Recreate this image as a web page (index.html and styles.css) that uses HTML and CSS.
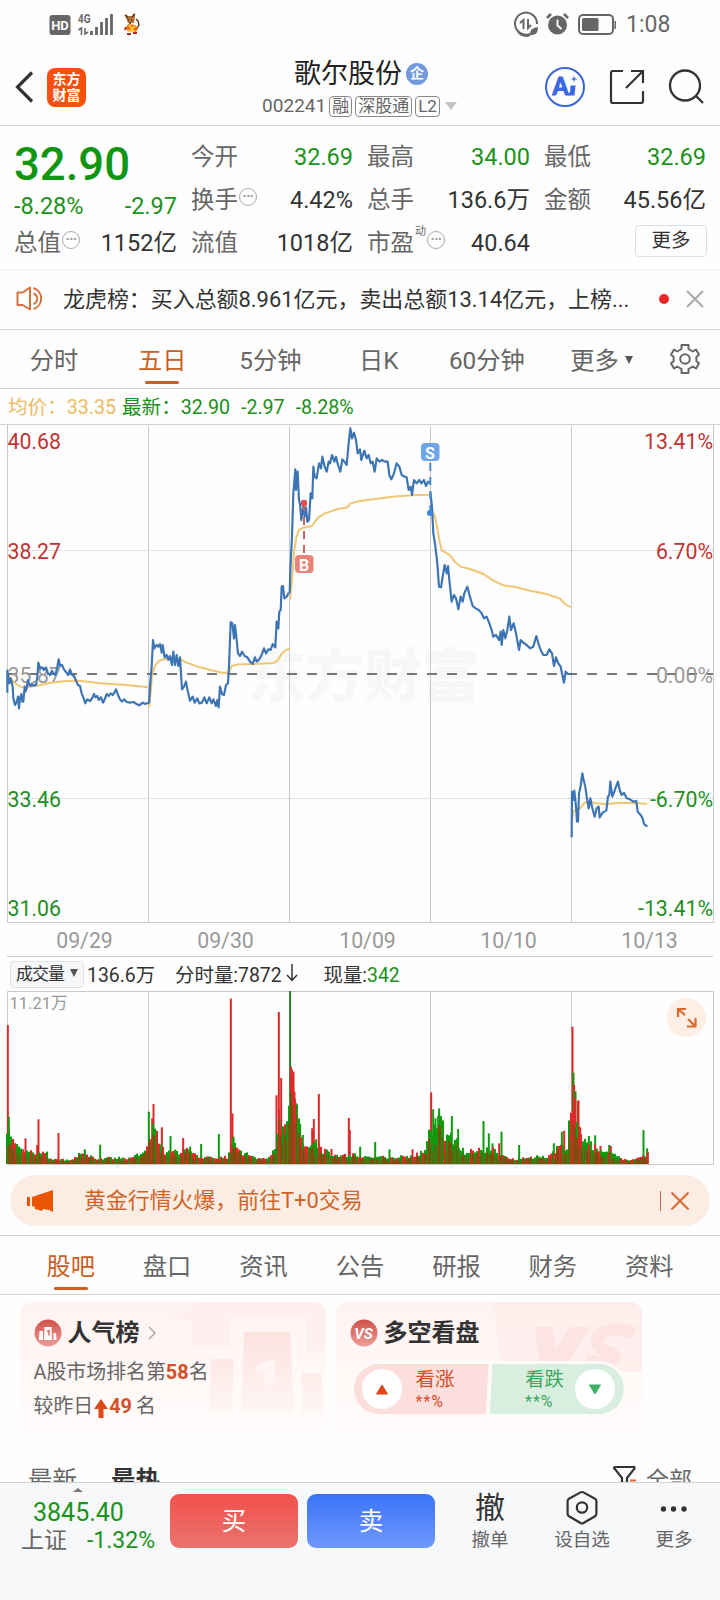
FILE: index.html
```html
<!DOCTYPE html>
<html lang="zh-CN">
<head>
<meta charset="utf-8">
<title>歌尔股份 002241</title>
<link rel="stylesheet" href="styles.css">
</head>
<body>
<main class="screen">
  <div class="status">
    <svg class="status-left" width="100" height="30" viewBox="45 8 100 30">
      <rect x="49.5" y="15" width="21" height="20" rx="3" fill="#666"/>
      <text x="60" y="30.2" text-anchor="middle" class="hd">HD</text>
      <text x="78" y="23" class="net" textLength="12.500" lengthAdjust="spacingAndGlyphs">4G</text>
      <path d="M78.500 30l3-2v7M85 28v6l3-2" fill="none" stroke="#666" stroke-width="1.600"/>
      <path d="M91.500 35v-4M96.500 35v-8M101.500 35v-13M106.500 35V18M111.500 35V14" stroke="#666" stroke-width="2.800"/>
      <path d="M126 14l2 2h4l2-3 1 4-1 6h-6l-2-5z" fill="#b87333"/>
      <path d="M125 15l3 3M132 17l3-3M128 20h1M131 20h1M129 23h2M136 30l3-5-1-4-2-2" fill="none" stroke="#553018" stroke-width="1.400"/>
      <path d="M128 24l7 1 3 3-2 4h-8l-2-4z" fill="#ee6c16"/>
      <path d="M129 25l3 4 3-3M128 31h7" fill="none" stroke="#f7d13b" stroke-width="2"/>
      <path d="M127 34h4M133 33h4M126 27l-1 3" stroke="#b32d17" stroke-width="2"/>
    </svg>
    <svg class="status-right" width="106" height="30" viewBox="510 8 106 30">
      <path d="M535 30a11 11 0 1 1 2-6M530 35a10 10 0 0 1-12 -3" fill="none" stroke="#666" stroke-width="2"/>
      <path d="M520 23l3.500-3v9M528 19v9l3-3" fill="none" stroke="#666" stroke-width="2"/>
      <path d="M538 27c0 7-3 8-8 8 0-6 3-7 8-8z" fill="#666"/>
      <circle cx="557.500" cy="25" r="9.500" fill="#666"/>
      <path d="M547 18l4-4M568 18l-4-4" stroke="#666" stroke-width="2.600"/>
      <path d="M557.500 19.500v6l4 3.500" fill="none" stroke="#fff" stroke-width="1.800"/>
      <rect x="579" y="15" width="34" height="19" rx="4" fill="none" stroke="#666" stroke-width="2"/>
      <rect x="582" y="18" width="16.500" height="13" rx="1.500" fill="#666"/>
      <path d="M615.500 21v8" stroke="#666" stroke-width="2"/>
    </svg>
    <span class="clock">1:08</span>
  </div>

  <header class="head">
    <div class="head-side">
      <svg width="20" height="34" viewBox="0 0 20 34"><path d="M18 2.500L3.500 17 18 31.500" fill="none" stroke="#333" stroke-width="3.200"/></svg>
      <div class="logo"><span>东方</span><span>财富</span></div>
    </div>
    <div class="head-mid">
      <div class="name">歌尔股份<i class="qi">企</i></div>
      <div class="code">002241<b>融</b><b>深股通</b><b>L2</b><i class="tri"></i></div>
    </div>
    <div class="head-side head-tools">
      <svg width="42" height="42" viewBox="0 0 42 42"><circle cx="21" cy="21" r="19" fill="none" stroke="#3a66dc" stroke-width="2"/><text x="8.500" y="29" class="ai" textLength="16" lengthAdjust="spacingAndGlyphs">A</text><path d="M26.500 19.500h5l-1 10h-6l.4-3h1.200z" fill="#3a66e4"/><path d="M30 9.500l.8 2.700 2.700.8-2.700.8-.8 2.700-.8-2.700-2.700-.8 2.700-.8z" fill="#3a66e4"/></svg>
      <svg width="36" height="36" viewBox="0 0 36 36"><path d="M14 2H4a2 2 0 0 0-2 2v28a2 2 0 0 0 2 2h28a2 2 0 0 0 2-2V22M22 2h12v12M33 3L17 19" fill="none" stroke="#333" stroke-width="2.200"/></svg>
      <svg width="36" height="36" viewBox="0 0 36 36"><circle cx="17" cy="16.500" r="15" fill="none" stroke="#333" stroke-width="2.300"/><path d="M28 27l7 7" stroke="#333" stroke-width="2.300"/></svg>
    </div>
  </header>

  <section class="quote">
    <div class="qcol wide">
      <div class="price">32.90</div>
      <div class="qcell green chg"><span>-8.28%</span><span>-2.97</span></div>
      <div class="qcell"><label>总值<i class="info">···</i></label><span>1152亿</span></div>
    </div>
    <div class="qcol">
      <div class="qcell"><label>今开</label><span class="green">32.69</span></div>
      <div class="qcell"><label>换手<i class="info">···</i></label><span>4.42%</span></div>
      <div class="qcell"><label>流值</label><span>1018亿</span></div>
    </div>
    <div class="qcol wide">
      <div class="qcell"><label>最高</label><span class="green">34.00</span></div>
      <div class="qcell"><label>总手</label><span>136.6万</span></div>
      <div class="qcell"><label>市盈<sup>动</sup><i class="info">···</i></label><span>40.64</span></div>
    </div>
    <div class="qcol">
      <div class="qcell"><label>最低</label><span class="green">32.69</span></div>
      <div class="qcell"><label>金额</label><span>45.56亿</span></div>
      <div class="qcell end"><span class="more">更多</span></div>
    </div>
  </section>

  <section class="news">
    <svg width="30" height="26" viewBox="0 0 30 26"><path d="M1.500 6.500h5L14 1.500v22L6.500 19h-5z" fill="none" stroke="#d4713c" stroke-width="2" stroke-linejoin="round"/><path d="M17.500 7.500a5.600 5.600 0 0 1 0 10.500M17.500 2a11 11 0 0 1 0 21" fill="none" stroke="#d4713c" stroke-width="2"/></svg>
    <span class="news-text">龙虎榜：买入总额8.961亿元，卖出总额13.14亿元，上榜...</span>
    <i class="dot"></i>
    <svg width="18" height="18" viewBox="0 0 18 18"><path d="M1 1l16 16M17 1L1 17" stroke="#aaa" stroke-width="2"/></svg>
  </section>

  <nav class="periods">
    <span>分时</span><span class="on">五日</span><span>5分钟</span><span>日K</span><span>60分钟</span><span>更多<i class="caret"></i></span>
    <svg width="30" height="30" viewBox="0 0 30 30"><path d="M11.500 1h7v4l4.300 2.500L26 5.600l3 5.200-2.600 2v4.400l2.600 2-3 5.200-3.200-1.900-4.300 2.500v4h-7v-4l-4.300-2.500L4 24.400l-3-5.200 2.600-2v-4.400l-2.600-2 3-5.200 3.200 1.900L11.500 5z" fill="none" stroke="#666" stroke-width="2" stroke-linejoin="round"/><circle cx="15" cy="15" r="4.800" fill="none" stroke="#666" stroke-width="2"/></svg>
  </nav>

  <div class="legend"><span class="avg">均价：33.35</span><span>最新：32.90</span><span>-2.97</span><span>-8.28%</span></div>

  <svg class="chart" width="720" height="532" viewBox="0 425 720 532">
    <g class="mark"><text x="248" y="697">东方财富</text></g>
    <path class="grid" d="M7.500 425v497.500h706V425M148.500 426v496M289.500 426v496M430.500 426v496M571.500 426v496M7 956.500h706"/>
    <path class="dots" d="M8 550.500h705M8 798.500h705"/>
    <path class="zero" d="M7 674h706"/>
    <g class="axis">
      <text class="up" x="7.500" y="448.500">40.68</text><text class="up" x="7.500" y="558.500">38.27</text>
      <text class="flat" x="7.500" y="682.500">35.87</text>
      <text class="dn" x="7.500" y="806.500">33.46</text><text class="dn" x="7.500" y="916">31.06</text>
      <g text-anchor="end">
        <text class="up" x="713" y="448.500">13.41%</text><text class="up" x="713" y="558.500">6.70%</text>
        <text class="flat" x="713" y="682.500">0.00%</text>
        <text class="dn" x="713" y="806.500">-6.70%</text><text class="dn" x="713" y="916">-13.41%</text>
      </g>
      <g text-anchor="middle" class="flat">
        <text x="84.500" y="947.500">09/29</text><text x="225.500" y="947.500">09/30</text><text x="367.500" y="947.500">10/09</text><text x="508.500" y="947.500">10/10</text><text x="649.500" y="947.500">10/13</text>
      </g>
    </g>
    <g transform="translate(0 420) scale(.33333)">
      <g class="avgline">
        <path d="M24 765L45 790 65 802 90 800 120 796 150 788 200 783 240 782 300 790 370 794 445 802"/>
        <path d="M447 862L452 820 456 765 465 737 478 722 495 717 540 718 560 728 600 742 640 752 670 759 688 757 695 738 715 733 760 732 820 729 832 722 845 702 855 692 868 686"/>
        <path d="M870 538L876 480 882 400 888 355 897 330 910 323 935 318 955 292 975 280 1010 268 1042 262 1052 250 1080 243 1130 236 1190 229 1240 226 1290 224"/>
        <path d="M1292 262L1305 290 1312 325 1320 370 1326 392 1350 405 1364 425 1382 440 1410 447 1450 462 1480 482 1510 496 1550 502 1590 512 1640 522 1680 536 1698 555 1714 562"/>
        <path d="M1715 1205L1721 1172 1740 1165 1755 1147 1770 1146 1790 1150 1820 1153 1850 1149 1900 1148 1942 1152"/>
      </g>
      <g class="priceline">
        <path d="M22 818L22 752 28 790 32 775 38 800 40 835 45 855 50 845 54 830 57 865 60 835 64 822 67 845 70 845 74 800 76 815 80 805 84 780 88 795 92 798 96 790 100 797 108 795 112 770 115 728 120 745 126 742 132 750 138 742 143 758 150 765 156 752 160 760 166 765 172 740 176 718 180 738 186 735 192 748 198 756 204 765 210 748 216 765 222 768 228 782 234 795 240 798 245 820 250 832 256 850 262 838 270 843 276 835 282 822 286 832 292 828 296 840 303 832 309 848 314 838 320 822 326 828 332 820 338 825 343 818 348 808 354 825 360 838 366 845 372 838 380 846 390 848 400 846 410 852 418 856 428 848 436 852 445 848M447 850L450 800 455 740 459 660 463 685 470 675 475 680 480 672 485 698 488 675 494 712 500 705 505 720 510 708 516 735 520 695 525 735 530 705 535 738 540 712 543 760 546 808 552 800 558 785 563 812 570 842 578 830 584 848 592 835 598 850 606 848 613 832 620 850 628 832 635 850 640 838 648 858 652 840 656 862 660 800 666 822 672 825 678 795 684 790 687 740 692 606 697 610 702 655 705 615 710 660 714 700 720 708 726 695 734 708 742 712 750 725 758 732 765 712 770 725 778 718 785 705 792 685 798 700 805 688 812 690 818 672 826 682 830 605 835 625 838 575 842 570 845 500 849 498 853 535 860 530 866 518"/>
        <path d="M869 520L871 450 876 350 880 220 886 148 888 210 893 155 897 240 900 252 904 300 910 258 914 290 918 262 922 305 927 300 932 220 937 235 940 140 944 170 950 175 957 130 963 145 967 110 974 140 980 155 986 125 990 130 996 105 1003 125 1008 110 1014 135 1021 155 1027 118 1033 125 1040 135 1046 70 1051 25 1056 55 1062 38 1068 60 1073 100 1080 88 1084 120 1093 92 1100 115 1106 105 1112 130 1118 125 1124 155 1130 115 1138 125 1146 120 1155 125 1163 125 1168 165 1174 178 1182 160 1190 130 1198 140 1205 165 1213 170 1220 172 1226 210 1232 200 1236 225 1242 180 1250 190 1258 180 1264 190 1272 180 1278 198 1284 185 1291 190"/>
        <path d="M1291 215L1296 260 1300 340 1305 370 1312 430 1317 500 1323 502 1328 470 1334 435 1340 460 1344 438 1348 480 1355 545 1362 525 1368 535 1375 568 1382 530 1388 545 1393 520 1402 500 1410 530 1418 558 1427 565 1436 570 1445 580 1452 595 1460 590 1468 610 1475 630 1480 650 1488 645 1497 660 1502 635 1505 675 1510 630 1516 655 1522 630 1528 590 1533 630 1541 610 1548 640 1557 690 1562 660 1570 668 1580 675 1590 685 1600 680 1609 648 1615 670 1622 690 1630 705 1640 705 1648 688 1656 700 1662 738 1668 712 1675 730 1682 740 1687 765 1692 788 1697 755 1704 762 1714 762"/>
        <path d="M1715 1252L1716 1115 1720 1140 1723 1112 1728 1160 1731 1205 1734 1205 1737 1120 1741 1105 1747 1060 1751 1080 1756 1100 1760 1130 1766 1165 1771 1135 1776 1160 1784 1190 1790 1165 1796 1160 1799 1192 1808 1178 1819 1172 1824 1130 1828 1125 1831 1085 1837 1130 1842 1118 1848 1100 1854 1085 1859 1110 1865 1125 1872 1118 1880 1135 1890 1138 1900 1145 1909 1143 1913 1175 1922 1185 1928 1195 1932 1212 1942 1220"/>
      </g>
    </g>
    <g class="trade">
      <path d="M304 503v50" stroke="#cf6560" stroke-width="2" stroke-dasharray="8 6"/><circle cx="304" cy="503" r="3.200" fill="#e05050"/>
      <rect x="295" y="555" width="18.500" height="18" rx="4" fill="#e98478"/><text x="304.200" y="570.500">B</text>
      <path d="M430.300 463v50" stroke="#4d8ad0" stroke-width="2" stroke-dasharray="8 6"/><circle cx="430" cy="513" r="3" fill="#3f86e8"/>
      <rect x="421" y="443" width="18.500" height="18" rx="4" fill="#6fa5e8"/><text x="430" y="458.500">S</text>
    </g>
  </svg>

  <div class="volhead"><span class="pick">成交量<i class="caret"></i></span><span class="v1">136.6万</span><span class="v2">分时量:7872<svg width="12" height="18" viewBox="0 0 12 18"><path d="M6 0v16M1 11l5 5.500L11 11" fill="none" stroke="#333" stroke-width="1.500"/></svg></span><span>现量:<em class="green">342</em></span></div>

  <svg class="vol" width="720" height="175" viewBox="0 991 720 175">
    <path class="grid" d="M7.500 991.500h706v173H7.500zM148.500 992v172M289.500 992v172M430.500 992v172M571.500 992v172"/>
    <text x="9.500" y="1009" class="volmax">11.21万</text>
    <g id="bars" transform="translate(0 940) scale(.33333)"></g>
    <circle cx="686.500" cy="1017.500" r="19.500" fill="#fdeee6"/>
    <path d="M685 1015l-7-6M678 1017v-8h8M688 1019l7 7M687 1026.500h8.500V1018" fill="none" stroke="#d96a2c" stroke-width="2.200"/>
  </svg>

  <div class="promo">
    <svg width="28" height="24" viewBox="0 0 28 24"><path d="M0 8h3v9H0zM5 8L26 1v22l-4-2-6-1-1 2-7-2v-2l-3-1z" fill="#ea5504"/></svg>
    <span class="promo-text">黄金行情火爆，前往T+0交易</span>
    <i class="bar"></i>
    <svg width="18" height="18" viewBox="0 0 18 18"><path d="M.500 .500l17 17M17.500 .500l-17 17" stroke="#dd6a33" stroke-width="2"/></svg>
  </div>

  <nav class="tabs"><span class="on">股吧</span><span>盘口</span><span>资讯</span><span>公告</span><span>研报</span><span>财务</span><span>资料</span></nav>

  <section class="cards">
    <article class="card">
      <svg class="deco" width="306" height="136" viewBox="0 0 306 136"><defs><linearGradient id="dg" x1="0" y1="0" x2="0" y2="1"><stop offset="0" stop-color="#fce2df"/><stop offset="1" stop-color="#fef6f4"/></linearGradient></defs><path d="M178 0h128v50h-20V15h-76v30h-38V18h-22z" fill="#fdeeec" opacity=".7"/><path d="M191 57h23l-2 54h-23zM224 30h46l4 81h-53zM282 71h19l2 40h-21z" fill="url(#dg)"/><path d="M236 63l18-6 2 26h-12l-1-14-7 2z" fill="#fff5f2"/></svg>
      <h3><svg width="28" height="28" viewBox="0 0 28 28"><defs><linearGradient id="rg" x1="0" y1="0" x2="0" y2="1"><stop offset="0" stop-color="#d1504b"/><stop offset="1" stop-color="#ec9f98"/></linearGradient></defs><circle cx="14" cy="14" r="13.500" fill="url(#rg)"/><path d="M5.500 12h3.500v9H5zM10.500 8h7l.500 13H10zM19.500 14h2.500l.500 7h-3z" fill="#fff"/><path d="M13 12.500l2-1v5" stroke="#d96b65" fill="none" stroke-width="1.500"/></svg>人气榜<svg class="chev" width="8" height="14" viewBox="0 0 8 14"><path d="M1 1l6 6-6 6" fill="none" stroke="#aaa" stroke-width="1.500"/></svg></h3>
      <p>A股市场排名第<strong>58</strong>名</p>
      <p>较昨日<svg width="16" height="19" viewBox="0 0 16 19"><path d="M8 0l7 10H10.500v9h-5v-9H1z" fill="#dd4a1a"/></svg><strong>49</strong><span class="unit">名</span></p>
    </article>
    <article class="card">
      <svg class="deco" width="306" height="136" viewBox="0 0 306 136"><path d="M158 0h148v70H165z" fill="#fdeae8" opacity=".6"/><path d="M199 25h17l4 22 14-22h20l-25 40h-25z" fill="#fce4e2"/><path d="M298 31q-12-5-24-3-14 3-13 13 1 6 12 9 9 3 3 8-8 5-26 0" fill="none" stroke="#fce4e2" stroke-width="12"/></svg>
      <h3><svg width="28" height="28" viewBox="0 0 28 28"><circle cx="14" cy="14" r="13.500" fill="url(#rg)"/><text x="13.500" y="19.500" class="vs">VS</text></svg>多空看盘</h3>
      <div class="poll">
        <div class="bull"><i class="ball"><svg width="14" height="11" viewBox="0 0 14 11"><path d="M7 1l5.500 9h-11z" fill="#dd4a1a" stroke="#dd4a1a" stroke-linejoin="round"/></svg></i><span>看涨<small>**%</small></span></div>
        <div class="bear"><span>看跌<small>**%</small></span><i class="ball"><svg width="14" height="11" viewBox="0 0 14 11"><path d="M7 10L1.500 1h11z" fill="#3fae65" stroke="#3fae65" stroke-linejoin="round"/></svg></i></div>
      </div>
    </article>
  </section>

  <section class="feed"><span>最新</span><span class="hot">最热</span><span class="all"><svg width="26" height="26" viewBox="0 0 26 26"><path d="M3 2h18a1 1 0 0 1 1 2l-7 9v11l-5-4v-7L3 4a1 1 0 0 1 0-2z" fill="none" stroke="#333" stroke-width="2.200"/><path d="M18 15.500h6" stroke="#dd6a33" stroke-width="2"/></svg>全部</span></section>

  <footer class="dock">
    <div class="index"><i class="up-tri"></i><div class="idx">3845.40</div><div class="idx2"><label>上证</label><span>-1.32%</span></div></div>
    <button class="buy">买</button><button class="sell">卖</button>
    <div class="act"><b>撤</b><span>撤单</span></div>
    <div class="act"><svg width="34" height="36" viewBox="0 0 34 36"><path d="M15.500 2.400q1.500-.8 3 0l11.500 6.400q1.400.8 1.400 2.400v12.600q0 1.600-1.400 2.400l-11.500 6.800q-1.500.8-3 0L4 26.200q-1.400-.8-1.400-2.400V11.200q0-1.600 1.400-2.400z" fill="none" stroke="#333" stroke-width="2.200"/><circle cx="17" cy="17.500" r="5.200" fill="none" stroke="#333" stroke-width="2.200"/></svg><span>设自选</span></div>
    <div class="act"><svg width="34" height="36" viewBox="0 0 34 36"><circle cx="6.500" cy="19" r="2.700" fill="#333"/><circle cx="16.500" cy="19" r="2.700" fill="#333"/><circle cx="27" cy="19" r="2.700" fill="#333"/></svg><span>更多</span></div>
  </footer>
</main>
<script src="volume.js"></script>
</body>
</html>
```
FILE: styles.css
```css
* { box-sizing: border-box; }
body { margin: 0; background: #fefefe; font-family: Roboto, "Noto Sans CJK SC", sans-serif; color: #333; }
i, em { font-style: normal; }
svg { display: block; flex: none; }
.screen { width: 720px; height: 1600px; overflow: hidden; display: flex; flex-direction: column; }
.screen > * { flex: none; }
.green { color: #1a931a; }

.status { height: 50px; display: flex; padding: 8px 0 0 45px; }
.status-right { margin-left: 365px; }
.clock { margin-left: 10px; font-size: 23px; line-height: 34px; color: #666; }
.hd { font: 700 13px Roboto, sans-serif; fill: #fff; }
.net { font: 700 13px Roboto, sans-serif; fill: #666; }

.head { height: 76px; display: flex; justify-content: space-between; border-bottom: 1px solid #d2d2d2; padding: 0 16px 0 14px; }
.head-side { display: flex; width: 200px; align-items: center; padding-bottom: 1px; }
.logo { margin-left: 13px; width: 39px; height: 39px; border-radius: 8px; background: #fa4f0c; color: #fff; font-weight: 700; font-size: 14px; line-height: 16.5px; display: flex; flex-direction: column; align-items: center; justify-content: center; }
.head-tools { justify-content: flex-end; gap: 23px; }
.ai { font: 900 25px Lato, sans-serif; fill: #3a66e4; stroke: #3a66e4; stroke-width: 1; }
.head-mid { display: flex; flex-direction: column; align-items: center; padding-top: 5px; }
.name { display: flex; align-items: center; font-size: 27px; line-height: 38px; margin-left: 4px; color: #222; }
.qi { width: 22px; height: 22px; border-radius: 11px; background: #7198dd; color: #fff; font-size: 14px; font-weight: 700; line-height: 21px; text-align: center; margin-left: 4px; }
.code { display: flex; align-items: center; font-size: 19px; line-height: 24px; margin: 1px 0 0 1px; color: #666; }
.code b { font-weight: 400; font-size: 17px; line-height: 19px; border: 1px solid #888; border-radius: 4px; padding: 0 2px; margin-left: 3px; height: 21px; }
.tri { border: 6.500px solid transparent; border-top: 8px solid #c4c4c4; border-bottom: 0; margin-left: 5px; }

.quote { height: 144px; display: flex; gap: 14px; padding: 7px 14px 0; border-bottom: 1px solid #eee; }
.qcol { flex: none; width: 162px; }
.wide { width: 163px; }
.qcell { height: 43px; display: flex; justify-content: space-between; font-size: 23.500px; line-height: 48px; white-space: nowrap; }
.qcell label { display: flex; color: #666; }
.price { height: 50px; font-size: 45.500px; line-height: 63px; font-weight: 500; color: #109610; }
.chg { height: 36px; line-height: 46px; }
.info { width: 18px; height: 18px; border: 1.500px solid #aaa; border-radius: 9px; margin: 12px 0 0 1px; font-size: 14px; line-height: 14px; font-weight: 700; text-align: center; color: #999; letter-spacing: -.5px; }
.qcell sup { font-size: 11px; line-height: 26px; margin-left: 1px; }
.qcell.end { justify-content: flex-end; align-items: center; }
.more { width: 72px; height: 32px; margin-right: -1px; border: 1px solid #d8dde2; border-radius: 4px; font-size: 19.500px; line-height: 29px; text-align: center; }

.news { height: 60px; display: flex; align-items: center; border-bottom: 1px solid #d2d2d2; padding: 0 16px 2px; }
.news-text { margin: -2px 0 0 17px; width: 578px; font-size: 21.950px; white-space: nowrap; }
.dot { width: 10px; height: 10px; border-radius: 5px; background: #e62828; margin: 0 17px 0 18px; }

.periods { height: 59px; display: grid; grid-template-columns: repeat(5, 108.2px) 121px 1fr; justify-items: center; align-items: center; border-bottom: 1px solid #d2d2d2; font-size: 24.300px; color: #666; }
.periods span, .tabs span { position: relative; line-height: 61px; height: 58px; }
.on { color: #cc5f22; }
.on::after { content: ""; position: absolute; left: 50%; bottom: 4px; width: 34px; height: 3px; margin-left: -17px; border-radius: 2px; background: #cc5f22; }
.caret { display: inline-block; border: 4.500px solid transparent; border-top: 8px solid #555; border-bottom: 0; margin-left: 6px; vertical-align: 5px; }
.periods svg { margin-right: 12px; }

.legend { height: 36px; border-bottom: 1px solid #d2d2d2; padding-left: 8px; font-size: 19.600px; line-height: 37px; color: #1a8f1a; display: flex; gap: 11px; }
.avg { color: #ecba62; margin-right: -5px; }

.grid { fill: none; stroke: #c8c8c8; stroke-width: 1; }
.dots { stroke: #c4c4c4; stroke-dasharray: 1 1; fill: none; }
.zero { stroke: #777; stroke-width: 1.800; stroke-dasharray: 10 10; }
.mark text { font: 900 58px "Noto Sans CJK SC", sans-serif; fill: #f7f7f8; }
.axis { font-size: 21.300px; }
.up { fill: #c03434; } .dn { fill: #1f8f1f; } .flat { fill: #999; }
.avgline path { fill: none; stroke: #f0c674; stroke-width: 6; }
.priceline path { fill: none; stroke: #3d74b4; stroke-width: 6.500; stroke-linejoin: round; }
.trade text { font: 700 16px Roboto, sans-serif; fill: #fff; text-anchor: middle; }

.volhead { height: 34px; display: flex; align-items: center; padding: 0 0 2px 10px; font-size: 19.400px; }
.pick { width: 74px; height: 27px; border: 1px solid #dfe3e8; border-radius: 4px; background: #f6f7f9; font-size: 17px; letter-spacing: -1px; line-height: 24px; padding-left: 5px; margin: 2px 3px 0 0; white-space: nowrap; }
.pick .caret { margin-left: 6px; vertical-align: 3px; }
.v2 { display: flex; align-items: center; margin: 0 26px 0 20px; }
.v2 svg { margin-left: 4px; }
.volmax { font-size: 16.500px; fill: #999; }

.promo { height: 51px; margin: 9px 10px 0; border-radius: 26px; background: #fcede4; display: flex; align-items: center; padding: 0 21px 0 17px; color: #d06428; }
.promo-text { margin: -4px 0 0 29px; font-size: 21.900px; flex: 1; white-space: nowrap; }
.bar { width: 1px; height: 20px; background: #c8703c; margin-right: 10px; }

.tabs { height: 60px; margin-top: 9px; border: 1px solid #d2d2d2; border-width: 1px 0; padding: 0 22.500px; display: grid; grid-template-columns: repeat(7, 1fr); justify-items: center; font-size: 24.300px; color: #666; }
.tabs span { line-height: 62px; }

.cards { display: flex; gap: 10px; padding: 7px 20px 0; }
.card { position: relative; width: 306px; height: 136px; border-radius: 12px; overflow: hidden; background: linear-gradient(#fff3f1, #fffdfc); padding: 14px 13.500px; }
.deco { position: absolute; left: 0; top: 0; }
.card > :not(.deco) { position: relative; }
.card h3 { margin: 0 0 7px; display: flex; align-items: center; font-size: 24px; line-height: 34px; height: 34px; font-weight: 700; }
.card h3 svg:first-child { margin-right: 6px; }
.card h3 .chev { margin-left: 8px; }
.card p { margin: -1px 0 1px; display: flex; align-items: center; font-size: 19.900px; line-height: 34px; height: 34px; color: #666; }
.card strong { color: #d4502a; font-weight: 700; }
.card p svg { margin: 2px 0 0; }
.unit { margin-left: 4px; }
.vs { font: italic 700 15px Roboto, sans-serif; fill: #fff; text-anchor: middle; }
.poll { width: 270px; height: 50px; margin: 14px 0 0 4px; display: flex; border-radius: 25px; overflow: hidden; outline: 3px solid #fff9f8; }
.bull, .bear { display: flex; align-items: center; line-height: 28px; font-size: 19.500px; white-space: nowrap; }
.bull { width: 135px; background: #fcdedc; color: #d4502a; clip-path: polygon(0 0, 100% 0, 98% 100%, 0 100%); padding-left: 8px; gap: 14px; }
.bear { width: 135px; background: #d8efdf; color: #3fa860; clip-path: polygon(3% 0, 100% 0, 100% 100%, 1% 100%); padding-left: 36.500px; gap: 11px; }
.poll small { display: block; font-size: 16px; line-height: 16px; letter-spacing: 1px; padding-bottom: 3px; }
.ball { flex: none; width: 40px; height: 40px; border-radius: 20px; background: #fff; display: flex; align-items: center; justify-content: center; }

.feed { height: 44px; padding: 25px 28px 0; display: flex; overflow: hidden; font-size: 24.500px; line-height: 36px; color: #666; }
.hot { margin-left: 34px; font-weight: 700; color: #333; }
.all { margin-left: auto; display: flex; gap: 8px; font-size: 23px; }
.all svg { margin-top: 2px; }

.dock { flex: 1 0 auto !important; border-top: 1px solid #d2d2d2; background: #f6f8fa; display: flex; }
.index { position: relative; width: 170px; padding: 15px 15px 0 21px; color: #1a931a; }
.up-tri { position: absolute; left: 73px; top: 5px; border: 5px solid transparent; border-top: 0; border-bottom: 4px solid #777; }
.idx { font-size: 25px; line-height: 30px; padding-left: 12px; }
.idx2 { font-size: 23px; line-height: 26px; display: flex; justify-content: space-between; }
.idx2 label { color: #666; }
.dock button { width: 128px; height: 54px; margin: 11px 9px 0 0; border: 0; border-radius: 9px; padding: 2px 0 0; color: #fff; font: 24.500px/52px Roboto, "Noto Sans CJK SC", sans-serif; }
.buy { background: linear-gradient(#f2514b, #ea736e); }
.sell { background: linear-gradient(#3a74f6, #6f98fd); }
.act { width: 92px; display: flex; flex-direction: column; align-items: center; padding-top: 7px; color: #666; font-size: 18.500px; line-height: 26px; }
.act b { font-weight: 400; font-size: 30px; line-height: 36px; color: #333; }
.act span { margin-top: 1px; }
```
FILE: volume.js
```js
// Volume histogram: a noisy baseline under a piecewise envelope, plus named spikes.
const floor = 672;
const envelope = [
  [20, 130], [28, 85], [45, 60], [60, 42], [90, 38], [110, 30], [140, 35], [150, 14], [210, 14], [235, 30], [275, 26],
  [285, 14], [330, 20], [380, 18], [430, 34], [445, 75], [462, 120], [480, 55], [500, 35], [540, 40], [560, 45],
  [590, 24], [625, 22], [640, 18], [680, 22], [695, 75], [715, 40], [740, 32], [770, 18], [800, 22], [825, 50],
  [838, 160], [850, 100], [865, 150], [872, 290], [885, 190], [905, 85], [925, 55], [945, 75], [965, 45], [1000, 28],
  [1040, 28], [1060, 30], [1090, 24], [1150, 22], [1200, 24], [1240, 26], [1275, 40], [1290, 110], [1320, 150],
  [1335, 90], [1370, 75], [1395, 38], [1440, 45], [1480, 45], [1500, 28], [1540, 16], [1580, 22], [1640, 24],
  [1670, 50], [1700, 50], [1713, 190], [1725, 180], [1740, 100], [1765, 65], [1800, 40], [1840, 30], [1870, 14],
  [1905, 14], [1944, 34]
];
const R = '#dc2a2a', G = '#109a10', D = '#7d5010', DG = '#2c7a2c';
const spikes = [
  [23, 255, R], [26, 530, G], [76, 595, R], [115, 538, R], [111, 615, R], [175, 579, R], [254, 628, G], [300, 614, G],
  [446, 515, G], [460, 492, R], [456, 535, R], [485, 562, R], [511, 588, G], [549, 594, R], [570, 620, G], [603, 612, G],
  [656, 582, G], [692, 176, R], [697, 520, R], [700, 590, G], [829, 466, R], [836, 216, R], [843, 414, R], [838, 540, G],
  [875, 388, R], [880, 395, R], [883, 455, R], [888, 490, G], [870, 153, DG], [900, 552, G], [908, 585, G],
  [936, 565, R], [941, 537, R], [956, 462, R], [948, 598, G], [994, 627, R], [1046, 534, R], [1049, 570, R], [1080, 620, G],
  [1125, 606, G], [1168, 628, G], [1237, 628, R], [1293, 457, R], [1299, 508, G], [1306, 535, G], [1317, 505, G],
  [1314, 528, G], [1321, 528, G], [1355, 528, G], [1374, 567, G], [1450, 543, G], [1466, 580, G], [1477, 610, G],
  [1504, 575, G], [1497, 610, R], [1557, 615, G], [1661, 610, G], [1685, 575, G], [1692, 572, R], [1717, 260, R],
  [1720, 398, G], [1722, 435, R], [1726, 454, G], [1733, 483, R], [1735, 481, R], [1740, 562, R], [1766, 588, G],
  [1785, 586, G], [1801, 618, R], [1827, 615, G], [1832, 618, R], [1930, 570, G], [1941, 625, G], [1943, 636, R]
];
let seed = 7;
const rnd = () => (seed = (seed * 16807) % 2147483647) / 2147483647;
const level = x => {
  let i = 1;
  while (i < envelope.length - 1 && envelope[i][0] < x) i++;
  const [x0, a] = envelope[i - 1], [x1, b] = envelope[i];
  return a + (b - a) * (x - x0) / (x1 - x0);
};
let out = '';
const bar = (x, top, w, c) => { out += `<rect x="${x}" y="${top}" width="${w}" height="${floor - top}" fill="${c}"/>`; };
spikes.forEach(([x, top, c]) => bar(x - 2.5, top, 6, c));
for (let x = 18; x < 1942; x += 6) {
  const h = level(x + 2) * (0.7 + rnd() * 0.45);
  const warm = x > 1290 && x < 1480 ? 0.12 : x > 865 && x < 886 || x > 1730 && x < 1745 ? 0.8 : 0.4;
  const c = rnd() < warm ? R : G;
  bar(x, floor - h, 6.2, c);
  bar(x, floor - h * (0.45 + rnd() * 0.4), rnd() < 0.6 ? 3 : 6, D);
}
document.getElementById('bars').innerHTML = out;
```
